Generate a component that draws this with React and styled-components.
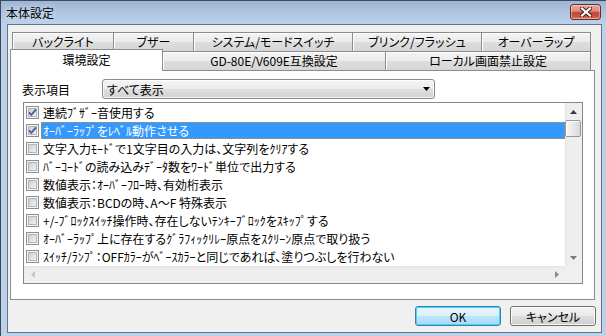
import React from 'react';
import styled, { createGlobalStyle, css } from 'styled-components';

const Global = createGlobalStyle`
  html, body { margin: 0; padding: 0; background: #ffffff; }
  body {
    font-family: "Noto Sans CJK JP", "Noto Sans", sans-serif;
    font-size: 12px;
    font-feature-settings: "palt";
    color: #000;
  }
  * { box-sizing: border-box; }
`;

const Window = styled.div`
  width: 606px;
  height: 336px;
  display: flex;
  flex-direction: column;
  border-left: 1px solid #3c4a5b;
  border-top: 1px solid #3c4a5b;
  background: linear-gradient(to bottom, #9db6d5 0px, #b2c8e2 14px, #bdd2ea 24px, #bdd2ea 100%);
  overflow: hidden;
`;

const TitleBar = styled.div`
  height: 23px;
  flex: none;
  display: flex;
  align-items: flex-start;
  justify-content: space-between;
  padding: 0 5px 0 5px;
`;

const Title = styled.span`
  line-height: 23px;
  font-size: 12px;
  color: #000;
  text-shadow: 0 0 6px rgba(255, 255, 255, 0.7);
`;

const CloseButton = styled.div`
  width: 31px;
  height: 16px;
  margin-top: 3px;
  border: 1px solid #6a2c25;
  border-radius: 3px;
  background: linear-gradient(to bottom, #e6a89e 0%, #d98c81 45%, #c4493b 50%, #c8513f 80%, #dc8174 100%);
  box-shadow: inset 0 0 0 1px rgba(255, 255, 255, 0.35);
  display: flex;
  align-items: center;
  justify-content: center;
`;

const FrameBody = styled.div`
  flex: 1;
  display: flex;
  padding: 0 4px 3px 6px;
`;

const Client = styled.div`
  flex: 1;
  border: 1px solid #61758d;
  background: #f0f0f0;
  display: flex;
  flex-direction: column;
  padding: 7px 0 0 2px;
`;

const TabControl = styled.div`
  width: 585px;
  display: flex;
  flex-direction: column;
`;

const TabRow = styled.div`
  display: flex;
  height: 19px;
  padding-left: ${(p) => p.$indent}px;
`;

const Tab = styled.div`
  width: ${(p) => p.$w}px;
  height: 19px;
  flex: none;
  border: 1px solid #898c95;
  border-bottom: none;
  margin-left: -1px;
  &:first-child { margin-left: 0; }
  background: linear-gradient(to bottom, #f3f3f3 0%, #ebebeb 50%, #dddddd 51%, #d6d6d6 100%);
  box-shadow: inset 1px 1px 0 #ffffff;
  text-align: center;
  line-height: 17px;
  font-size: 12px;
  white-space: nowrap;
  ${(p) =>
    p.$active &&
    css`
      height: 22px;
      margin-top: -2px;
      background: #ffffff;
      box-shadow: none;
      line-height: 20px;
      position: relative;
      z-index: 1;
    `}
`;

const Panel = styled.div`
  width: 585px;
  height: 230px;
  border: 1px solid #898c95;
  background: #ffffff;
  display: flex;
  flex-direction: column;
  padding: 8px 0 0 11px;
`;

const FilterRow = styled.div`
  display: flex;
  align-items: center;
  height: 20px;
`;

const FilterLabel = styled.span`
  width: 80px;
  font-size: 12px;
`;

const Dropdown = styled.div`
  width: 333px;
  height: 20px;
  border: 1px solid #8a8a8a;
  border-radius: 3px;
  background: linear-gradient(to bottom, #f4f4f4 0%, #ececec 50%, #dedede 51%, #d2d2d2 100%);
  box-shadow: inset 0 0 0 1px rgba(255, 255, 255, 0.7);
  display: flex;
  align-items: center;
  justify-content: space-between;
  padding: 0 4px 0 4px;
  font-size: 12px;
`;

const ListBox = styled.div`
  width: 560px;
  height: 182px;
  margin: 3px 0 0 1px;
  border: 1px solid #828790;
  background: #ffffff;
  display: grid;
  grid-template-columns: 1fr 17px;
  grid-template-rows: 1fr 17px;
`;

const Rows = styled.div`
  display: flex;
  flex-direction: column;
  overflow: hidden;
`;

const Row = styled.div`
  height: 18px;
  flex: none;
  display: flex;
  align-items: center;
  padding-left: 2px;
`;

const ItemText = styled.span`
  flex: 1;
  height: 17px;
  margin-left: 2px;
  padding-left: 1px;
  line-height: 16px;
  font-size: 12px;
  white-space: nowrap;
  border: 1px solid transparent;
  ${(p) =>
    p.$selected &&
    css`
      background: #3399ff;
      color: #ffffff;
      border: 1px dotted #e0862a;
    `}
`;

const VScroll = styled.div`
  display: flex;
  flex-direction: column;
  background: linear-gradient(to right, #e2e2e2 0px, #ededed 2px, #f0f0f0 100%);
`;

const HScroll = styled.div`
  display: flex;
  align-items: center;
  justify-content: space-between;
  background: linear-gradient(to bottom, #e2e2e2 0px, #ededed 2px, #f0f0f0 100%);
`;

const Corner = styled.div`
  background: #f0f0f0;
`;

const ArrowCell = styled.div`
  width: 17px;
  height: 17px;
  flex: none;
  display: flex;
  align-items: center;
  justify-content: center;
`;

const Thumb = styled.div`
  width: 16px;
  height: 17px;
  flex: none;
  border: 1px solid #979797;
  border-radius: 2px;
  background: linear-gradient(to right, #f6f6f6 0%, #e9e9e9 50%, #d9d9d9 100%);
  box-shadow: inset 1px 1px 0 #ffffff;
`;

const Spacer = styled.div`
  flex: 1;
`;

const ButtonRow = styled.div`
  display: flex;
  justify-content: flex-end;
  gap: 9px;
  margin-top: 6px;
  padding-right: 5px;
`;

const Button = styled.div`
  width: 86px;
  height: 20px;
  border: 1px solid #707070;
  border-radius: 3px;
  background: linear-gradient(to bottom, #f2f2f2 0%, #ebebeb 50%, #dddddd 51%, #cfcfcf 100%);
  box-shadow: inset 0 0 0 1px rgba(255, 255, 255, 0.8);
  display: flex;
  align-items: center;
  justify-content: center;
  font-size: 12px;
  ${(p) =>
    p.$default &&
    css`
      border-color: #3c7fb1;
      background: linear-gradient(to bottom, #eaf6fd 0%, #d9f0fc 50%, #bee6fd 51%, #a7d9f5 100%);
      box-shadow: inset 0 0 0 1px #48d4f7;
    `}
`;

const CheckBox = ({ checked }) => (
  <svg width="13" height="13" viewBox="0 0 13 13" style={{ flex: 'none' }}>
    <defs>
      <linearGradient id="cbg" x1="0" y1="0" x2="1" y2="1">
        <stop offset="0" stopColor="#c9ccd1" />
        <stop offset="1" stopColor="#f5f5f5" />
      </linearGradient>
    </defs>
    <rect x="0.5" y="0.5" width="12" height="12" fill="#f4f4f4" stroke="#8e8f8f" />
    <rect x="2.5" y="2.5" width="8" height="8" fill="url(#cbg)" stroke="#b2b5ba" />
    {checked && (
      <path d="M3 6.3 L5.4 8.8 L10 3.4" fill="none" stroke="#4a5f9c" strokeWidth="1.9" />
    )}
  </svg>
);

const Tri = ({ dir, color }) => {
  const paths = {
    up: 'M0 4 L3.5 0 L7 4 Z',
    down: 'M0 0 L7 0 L3.5 4 Z',
    left: 'M4 0 L4 7 L0 3.5 Z',
    right: 'M0 0 L4 3.5 L0 7 Z',
  };
  const vertical = dir === 'up' || dir === 'down';
  return (
    <svg width={vertical ? 7 : 4} height={vertical ? 4 : 7} viewBox={vertical ? '0 0 7 4' : '0 0 4 7'}>
      <path d={paths[dir]} fill={color} />
    </svg>
  );
};

const CloseX = () => (
  <svg width="12" height="10" viewBox="0 0 12 10">
    <path d="M2 1.5 L10 8.5 M10 1.5 L2 8.5" stroke="#4a1a14" strokeWidth="4" strokeLinecap="square" />
    <path d="M2 1.5 L10 8.5 M10 1.5 L2 8.5" stroke="#ffffff" strokeWidth="2.2" strokeLinecap="square" />
  </svg>
);

const row1Tabs = [
  ['バックライト', 102],
  ['ブザー', 81],
  ['システム/モードスイッチ', 160],
  ['ブリンク/フラッシュ', 130],
  ['オーバーラップ', 110],
];

const row2Tabs = [
  ['環境設定', 153, true],
  ['GD-80E/V609E互換設定', 224],
  ['ローカル画面禁止設定', 206],
];

const items = [
  { text: '連続ﾌﾞｻﾞｰ音使用する', checked: true },
  { text: 'ｵｰﾊﾞｰﾗｯﾌﾟをﾚﾍﾞﾙ動作させる', checked: true, selected: true },
  { text: '文字入力ﾓｰﾄﾞで1文字目の入力は、文字列をｸﾘｱする' },
  { text: 'ﾊﾞｰｺｰﾄﾞの読み込みﾃﾞｰﾀ数をﾜｰﾄﾞ単位で出力する' },
  { text: '数値表示：ｵｰﾊﾞｰﾌﾛｰ時、有効桁表示' },
  { text: '数値表示：BCDの時、A～F 特殊表示' },
  { text: '+/-ﾌﾞﾛｯｸｽｲｯﾁ操作時、存在しないﾃﾝｷｰﾌﾞﾛｯｸをｽｷｯﾌﾟする' },
  { text: 'ｵｰﾊﾞｰﾗｯﾌﾟ上に存在するｸﾞﾗﾌｨｯｸﾘﾚｰ原点をｽｸﾘｰﾝ原点で取り扱う' },
  { text: 'ｽｲｯﾁ/ﾗﾝﾌﾟ：OFFｶﾗｰがﾍﾞｰｽｶﾗｰと同じであれば、塗りつぶしを行わない' },
];

export default function App() {
  return (
    <>
      <Global />
      <Window>
        <TitleBar>
          <Title>本体設定</Title>
          <CloseButton>
            <CloseX />
          </CloseButton>
        </TitleBar>
        <FrameBody>
          <Client>
            <TabControl>
              <TabRow $indent={2}>
                {row1Tabs.map(([label, w]) => (
                  <Tab key={label} $w={w}>
                    {label}
                  </Tab>
                ))}
              </TabRow>
              <TabRow $indent={0}>
                {row2Tabs.map(([label, w, active]) => (
                  <Tab key={label} $w={w} $active={active}>
                    {label}
                  </Tab>
                ))}
              </TabRow>
              <Panel>
                <FilterRow>
                  <FilterLabel>表示項目</FilterLabel>
                  <Dropdown>
                    <span>すべて表示</span>
                    <Tri dir="down" color="#000" />
                  </Dropdown>
                </FilterRow>
                <ListBox>
                  <Rows>
                    {items.map((it) => (
                      <Row key={it.text}>
                        <CheckBox checked={it.checked} />
                        <ItemText $selected={it.selected}>{it.text}</ItemText>
                      </Row>
                    ))}
                  </Rows>
                  <VScroll>
                    <ArrowCell>
                      <Tri dir="up" color="#3a3a3a" />
                    </ArrowCell>
                    <Thumb />
                    <Spacer />
                    <ArrowCell>
                      <Tri dir="down" color="#7a7a7a" />
                    </ArrowCell>
                  </VScroll>
                  <HScroll>
                    <ArrowCell>
                      <Tri dir="left" color="#c4c4c4" />
                    </ArrowCell>
                    <ArrowCell>
                      <Tri dir="right" color="#8c8c8c" />
                    </ArrowCell>
                  </HScroll>
                  <Corner />
                </ListBox>
              </Panel>
            </TabControl>
            <ButtonRow>
              <Button $default>OK</Button>
              <Button>キャンセル</Button>
            </ButtonRow>
          </Client>
        </FrameBody>
      </Window>
    </>
  );
}
